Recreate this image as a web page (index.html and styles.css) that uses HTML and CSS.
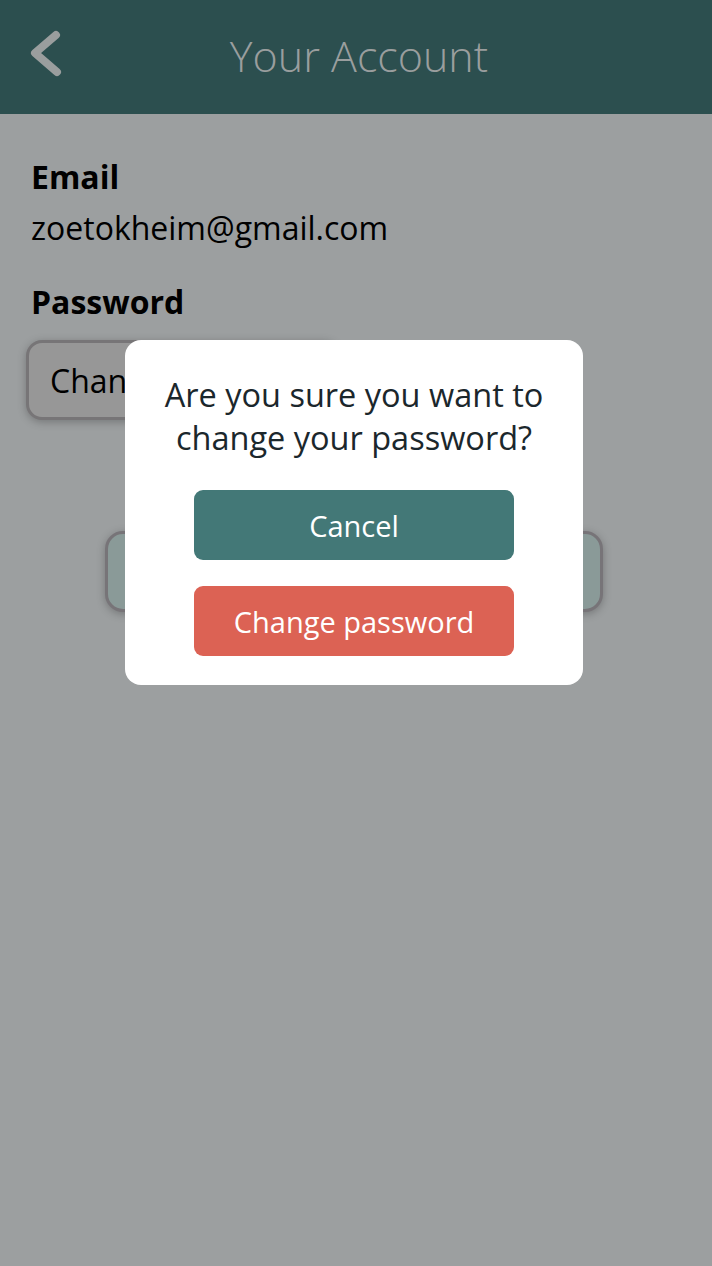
FILE: index.html
```html
<!DOCTYPE html>
<html lang="en">
<head>
<meta charset="utf-8">
<title>Your Account</title>
<link rel="stylesheet" href="styles.css">
</head>
<body>
<div class="screen">
  <header class="topbar">
    <button class="back" aria-label="Back">
      <svg width="40" height="60" viewBox="0 0 40 60"><polyline points="26,12 5,30 27,49" fill="none" stroke="#9a9e9e" stroke-width="8" stroke-linecap="round" stroke-linejoin="round"/></svg>
    </button>
    <h1 class="title">Your Account</h1>
  </header>
  <main class="content">
    <div class="label">Email</div>
    <div class="value">zoetokheim@gmail.com</div>
    <div class="label label-gap">Password</div>
    <button class="btn-change">Change password</button>
    <button class="btn-logout">Log out</button>
  </main>
  <div class="modal">
    <p class="modal-text">Are you sure you want to change your password?</p>
    <button class="mbtn mbtn-cancel">Cancel</button>
    <button class="mbtn mbtn-confirm">Change password</button>
  </div>
</div>
</body>
</html>
```
FILE: styles.css
```css
* { box-sizing: border-box; }
html, body { margin: 0; padding: 0; }
body {
  background: #9c9fa0;
  font-family: "Open Sans", "Noto Sans", sans-serif;
  width: 712px;
  height: 1266px;
  overflow: hidden;
}
.screen { position: relative; width: 712px; height: 1266px; }
.topbar {
  height: 114px;
  background: #2c4f4f;
  display: flex;
  align-items: center;
  justify-content: center;
  position: relative;
}
.back {
  position: absolute;
  left: 30px;
  top: 23px;
  background: none;
  border: 0;
  padding: 0;
  width: 40px;
  height: 60px;
}
.back svg { display: block; }
.title {
  margin: 0;
  font-size: 43px;
  font-weight: 300;
  color: #9a9e9e;
  letter-spacing: 0;
  transform: translate(3px, -2px);
}
.content {
  padding: 44px 0 0 31px;
  display: flex;
  flex-direction: column;
  align-items: flex-start;
}
.label {
  font-size: 32px;
  font-weight: 700;
  line-height: 38px;
  color: #000;
}
.value {
  margin-top: 13px;
  font-size: 32px;
  line-height: 38px;
  color: #000;
}
.label-gap { margin-top: 36px; }
.btn-change {
  margin-top: 19px;
  margin-left: -5px;
  width: 314px;
  height: 80px;
  background: #979797;
  border: 3px solid #777577;
  border-radius: 16px;
  box-shadow: 0 2px 8px rgba(0,0,0,0.25);
  font-family: inherit;
  font-size: 32px;
  color: #000;
  text-align: left;
  padding: 0 0 0 21px;
}
.btn-logout {
  margin-top: 111px;
  margin-left: 74px;
  width: 498px;
  height: 81px;
  background: #8a9a98;
  border: 3px solid #777478;
  border-radius: 18px;
  box-shadow: 0 2px 8px rgba(0,0,0,0.25);
  font-family: inherit;
  font-size: 32px;
  color: #1a2a2e;
}
.modal {
  position: absolute;
  left: 125px;
  top: 340px;
  width: 458px;
  height: 345px;
  background: #fff;
  border-radius: 16px;
  display: flex;
  flex-direction: column;
  align-items: center;
  padding-top: 33px;
}
.modal-text {
  margin: 0;
  width: 420px;
  text-align: center;
  font-size: 32.5px;
  line-height: 43px;
  color: #1b272c;
}
.mbtn {
  width: 320px;
  height: 70px;
  border: 0;
  border-radius: 9px;
  color: #fff;
  font-family: inherit;
  font-size: 29px;
}
.mbtn-cancel { background: #437877; margin-top: 31px; }
.mbtn-confirm { background: #dc6254; margin-top: 26px; }
```
